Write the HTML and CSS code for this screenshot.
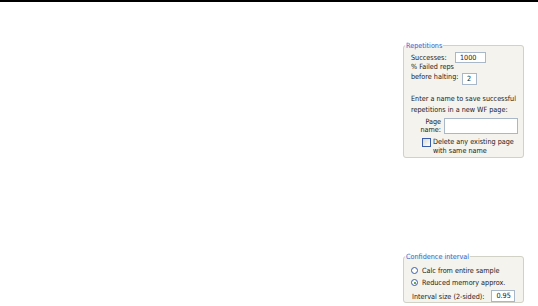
FILE: index.html
```html
<!DOCTYPE html>
<html>
<head>
<meta charset="utf-8">
<link rel="stylesheet" href="styles.css">
</head>
<body>
<div class="topline"></div>
<div class="layout">
  <div class="main"></div>
  <div class="side">
    <fieldset class="group rep">
      <legend>Repetitions</legend>
      <div class="body">
        <div class="row r-succ">
          <span class="lbl l-succ">Successes:</span>
          <span class="input w-succ">1000</span>
        </div>
        <div class="row r-fail">
          <span class="lbl l-fail">% Failed reps<br>before halting:</span>
          <span class="input w-fail">2</span>
        </div>
        <p class="note">Enter a name to save successful<br>repetitions in a new WF page:</p>
        <div class="row r-page">
          <span class="lbl l-page">Page<br>name:</span>
          <span class="input w-page"></span>
        </div>
        <div class="row r-check">
          <span class="check"></span>
          <span class="lbl l-check">Delete any existing page<br>with same name</span>
        </div>
      </div>
    </fieldset>
    <div class="spacer"></div>
    <fieldset class="group conf">
      <legend>Confidence interval</legend>
      <div class="body">
        <div class="radio-row r1"><span class="radio"></span><span>Calc from entire sample</span></div>
        <div class="radio-row r2"><span class="radio on"></span><span>Reduced memory approx.</span></div>
        <div class="row r-int">
          <span class="lbl">Interval size (2-sided):</span>
          <span class="input w-int">0.95</span>
        </div>
      </div>
    </fieldset>
  </div>
</div>
</body>
</html>
```
FILE: styles.css
```css
html, body {
  margin: 0;
  padding: 0;
  background: #ffffff;
}
body {
  width: 538px;
  height: 306px;
  overflow: hidden;
  font-family: "DejaVu Sans Condensed", "DejaVu Sans", sans-serif;
  font-stretch: condensed;
  font-size: 7.2px;
  color: #202020;
}
.topline {
  height: 2px;
  background: #000;
}
.layout {
  display: grid;
  grid-template-columns: 1fr 121px;
  padding-right: 14px;
}
.side {
  display: flex;
  flex-direction: column;
  padding-top: 39px;
}
.group {
  margin: 0;
  padding: 0;
  border: 1px solid #d2d1c6;
  border-radius: 3px;
  background: #f4f3ee;
  min-width: 0;
}
.group legend {
  color: #3563d2;
  padding: 0 1px;
  margin-left: 1px;
  height: 9px;
  line-height: 9px;
}
.body {
  padding: 0 1px 0 7px;
}
.row {
  display: flex;
  align-items: center;
}
.lbl {
  white-space: nowrap;
}
.input {
  display: block;
  box-sizing: border-box;
  height: 12px;
  border: 1px solid #a9b8c8;
  background: #fff;
  line-height: 10px;
  padding-left: 4px;
  color: #202020;
}
.rep .body { padding-bottom: 2px; }
.r-succ { margin-top: 2px; height: 11px; }
.l-succ { width: 44px; line-height: 11px; }
.w-succ { width: 31px; height: 11px; line-height: 9px; }
.r-fail { margin-top: -1px; align-items: flex-start; }
.l-fail { width: 51px; line-height: 10px; }
.w-fail { width: 15px; height: 12px; margin-top: 11px; }
.note {
  margin: 8px 0 0 0;
  line-height: 11px;
  white-space: nowrap;
}
.r-page { margin-top: 3px; }
.l-page { width: 30px; text-align: right; line-height: 8px; }
.w-page { width: 74px; height: 16px; margin-left: 3px; }
.r-check { margin-top: 3px; padding-left: 11px; align-items: flex-start; }
.check {
  width: 9px;
  height: 9px;
  box-sizing: border-box;
  border: 1px solid #3b5ca6;
  background: linear-gradient(135deg, #dad9d0, #ffffff);
  margin-top: 1px;
  margin-right: 2px;
}
.l-check { line-height: 9px; }
.spacer { height: 94px; }
.radio-row {
  display: flex;
  align-items: center;
  gap: 4px;
  line-height: 11px;
  white-space: nowrap;
}
.r1 { margin-top: 4px; }
.r2 { margin-top: 1px; }
.radio {
  width: 7px;
  height: 7px;
  box-sizing: border-box;
  border: 1px solid #3b5ca6;
  border-radius: 50%;
  background: #fff;
  position: relative;
}
.radio.on::after {
  content: "";
  position: absolute;
  left: 1.5px;
  top: 1.5px;
  width: 2px;
  height: 2px;
  border-radius: 50%;
  background: #2f8a2f;
}
.r-int { margin-top: 2px; padding-left: 1px; }
.w-int { width: 24px; height: 12px; margin-left: 7px; }
```
